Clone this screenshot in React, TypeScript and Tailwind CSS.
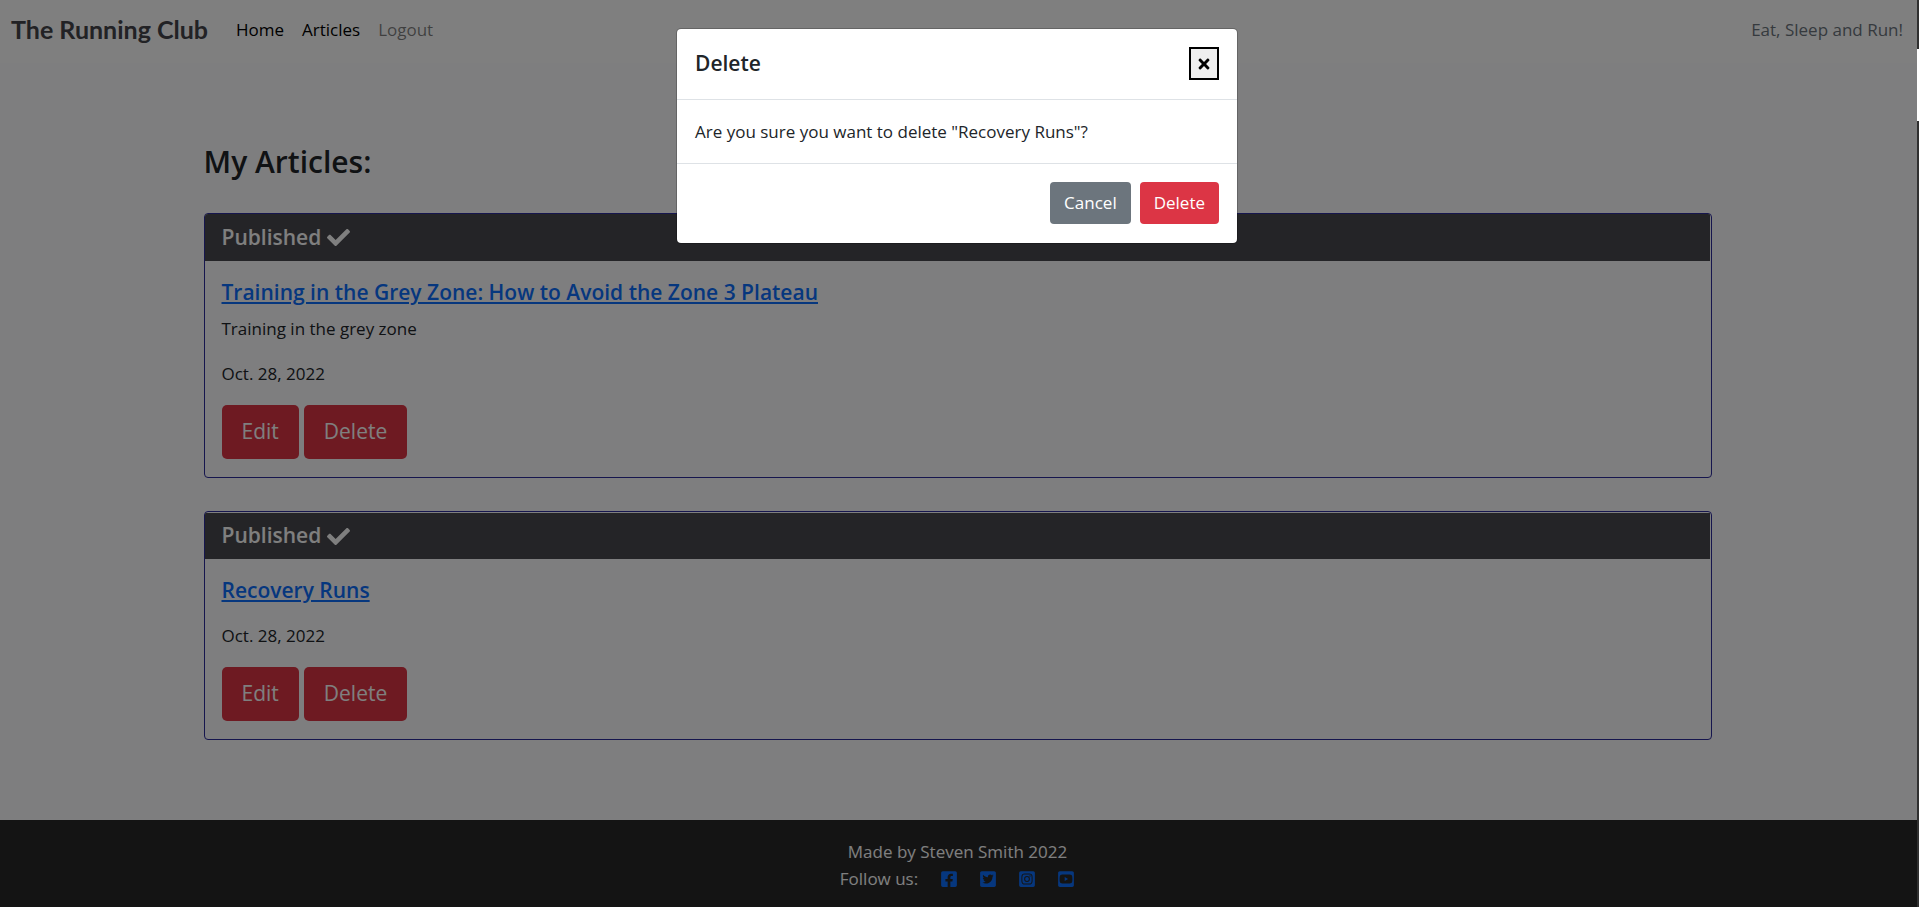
import React from "react";
import { FaCheck, FaTimes, FaFacebookSquare, FaTwitterSquare, FaInstagramSquare, FaYoutubeSquare } from "react-icons/fa";

type Article = { title: string; excerpt?: string; date: string };

const articles: Article[] = [
  {
    title: "Training in the Grey Zone: How to Avoid the Zone 3 Plateau",
    excerpt: "Training in the grey zone",
    date: "Oct. 28, 2022",
  },
  { title: "Recovery Runs", date: "Oct. 28, 2022" },
];

const socials = [
  { name: "Facebook", Icon: FaFacebookSquare },
  { name: "Twitter", Icon: FaTwitterSquare },
  { name: "Instagram", Icon: FaInstagramSquare },
  { name: "YouTube", Icon: FaYoutubeSquare },
];

function Navbar() {
  return (
    <header className="flex h-[63px] items-center bg-white pr-[14px] pb-[3px] pl-[11px] text-[17px]">
      <a href="#" className="mr-[28px] font-[Lato,sans-serif] text-[25px] font-bold text-[#44444a]">
        The Running Club
      </a>
      <nav className="flex gap-[18px] text-black">
        <a href="#">Home</a>
        <a href="#">Articles</a>
        <a href="#" className="text-black/50">Logout</a>
      </nav>
      <span className="ml-auto text-[#6c757d]">Eat, Sleep and Run!</span>
    </header>
  );
}

function ArticleCard({ article }: { article: Article }) {
  return (
    <article className="group overflow-hidden rounded-[4px] border border-[#2c2c9c] pr-px even:pt-px">
      <h2 className="flex h-[47px] items-center gap-[6px] bg-[#49494f] px-[17px] text-[21px] font-semibold text-white group-even:h-[46px]">
        Published <FaCheck className="size-[23px]" aria-hidden="true" />
      </h2>
      <div className="p-[18px] pl-[17px]">
        <h3 className="mb-[9px] text-[21px] leading-[27px] font-semibold">
          <a href="#" className="text-[#0d6efd] underline decoration-2 underline-offset-2">
            {article.title}
          </a>
        </h3>
        {article.excerpt && <p className="text-[17px] leading-[27px]">{article.excerpt}</p>}
        <p className="my-[18px] text-[17px] leading-[27px]">{article.date}</p>
        <div className="flex gap-[5px]">
          <button className="h-[54px] rounded-[5px] bg-[#dc3545] px-5 text-[21px] text-white">Edit</button>
          <button className="h-[54px] rounded-[5px] bg-[#dc3545] px-5 text-[21px] text-white">Delete</button>
        </div>
      </div>
    </article>
  );
}

function Footer() {
  return (
    <footer className="flex flex-1 flex-col items-center bg-[#292929] pt-[18px] pr-[2px] text-[17px] leading-[27px] text-white">
      <p>Made by Steven Smith 2022</p>
      <div className="flex items-center">
        Follow us:
        <ul className="ml-[22px] flex gap-[21px]">
          {socials.map(({ name, Icon }) => (
            <li key={name}>
              <a href="#" aria-label={name} className="text-[#0d6efd]">
                <Icon className="size-[18px]" />
              </a>
            </li>
          ))}
        </ul>
      </div>
    </footer>
  );
}

function DeleteDialog() {
  return (
    <div className="absolute inset-0 bg-black/50 pt-[28px] pr-[3px]">
      <div
        role="dialog"
        aria-modal="true"
        aria-labelledby="dialog-title"
        className="mx-auto max-w-[562px] rounded-[5px] border border-black/20 bg-white bg-clip-padding"
      >
        <div className="flex h-[71px] items-center justify-between border-b border-[#dee2e6] px-[18px] pb-px">
          <h2 id="dialog-title" className="text-[21px] font-semibold">Delete</h2>
          <button
            aria-label="Close"
            className="flex h-[33px] w-[30px] items-center justify-center border-2 border-black bg-[#efefef] text-black"
          >
            <FaTimes className="size-4" />
          </button>
        </div>
        <p className="border-b border-[#dee2e6] p-[18px] text-[17px] leading-[27px]">
          Are you sure you want to delete "Recovery Runs"?
        </p>
        <div className="flex justify-end gap-[9px] p-[18px] pb-[19px] text-[17px] text-white">
          <button className="h-[42px] rounded-[4px] bg-[#6c757d] px-[14px]">Cancel</button>
          <button className="h-[42px] rounded-[4px] bg-[#dc3545] px-[14px]">Delete</button>
        </div>
      </div>
    </div>
  );
}

export default function App() {
  return (
    <div className="flex min-h-screen bg-[#303030] font-['Open_Sans',sans-serif] text-[#212529]">
      <div className="relative flex flex-1 flex-col bg-[#fcfcff]">
        <Navbar />
        <div className="pr-[2px]">
          <main className="mx-auto w-4/5 px-3 pt-[77px] pb-[80px]">
            <h1 className="mb-[30px] text-[30px] leading-[43px] font-semibold">My Articles:</h1>
            <div className="flex flex-col gap-[33px]">
              {articles.map((article) => (
                <ArticleCard key={article.title} article={article} />
              ))}
            </div>
          </main>
        </div>
        <Footer />
        <DeleteDialog />
      </div>
      <div className="w-[2px] pt-[49px]">
        <div className="h-[72px] bg-white" />
      </div>
    </div>
  );
}
